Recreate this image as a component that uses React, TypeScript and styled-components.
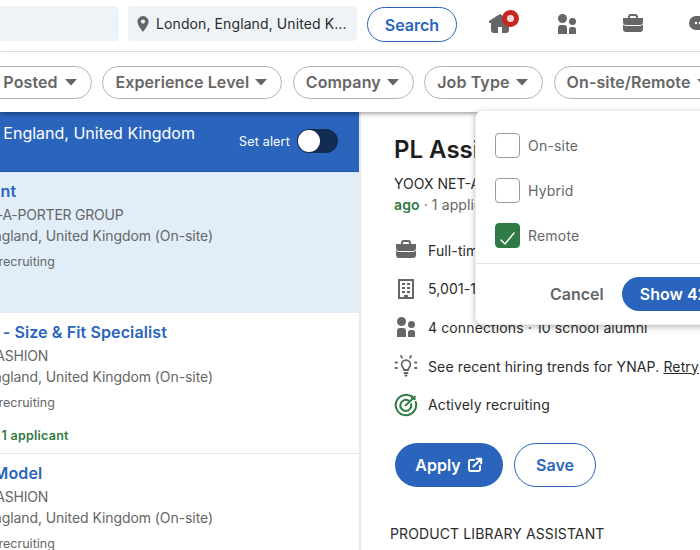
import * as React from "react";
import styled, { createGlobalStyle } from "styled-components";

const GlobalStyle = createGlobalStyle`
  html, body { margin: 0; padding: 0; background: #fff; }
  * { box-sizing: border-box; }
  body { font-family: Inter, "Liberation Sans", sans-serif; }
`;

const blue = "#2a64bd";
const green = "#2f7a45";
const gray = "#666666";
const ink = "#2b2b2b";

const Page = styled.div`
  position: relative;
  width: 700px;
  height: 550px;
  overflow: hidden;
  background: #fff;
`;

const Header = styled.header`
  display: flex;
  align-items: center;
  height: 52px;
  margin-left: -100px;
  width: 900px;
  padding-bottom: 4px;
  border-bottom: 1px solid #e8e8e8;
`;

const SearchInput = styled.div`
  width: 219px;
  height: 35px;
  background: #eef3f8;
  border-radius: 4px;
`;

const LocationInput = styled.div`
  display: flex;
  align-items: center;
  gap: 5px;
  width: 229px;
  height: 35px;
  margin-left: 9px;
  padding-left: 7px;
  background: #eef3f8;
  border-radius: 4px;
  font-size: 14px;
  letter-spacing: 0.1px;
  color: ${ink};
  white-space: nowrap;
`;

const SearchButton = styled.button`
  width: 90px;
  height: 35px;
  margin: 2px 0 0 10px;
  padding: 0;
  background: #fff;
  border: 1.5px solid ${blue};
  border-radius: 18px;
  color: ${blue};
  font: 600 16px Inter, sans-serif;
`;

const Nav = styled.nav`
  display: flex;
  margin: 1px 0 0 10px;
`;

const NavItem = styled.div`
  position: relative;
  display: flex;
  justify-content: center;
  width: 66.5px;
  color: ${gray};
`;

const Badge = styled.span`
  position: absolute;
  top: -2px;
  left: 34.5px;
  width: 17px;
  height: 17px;
  border-radius: 50%;
  background: #f3d9d7;
  border: 5.5px solid #c5281f;
`;

const FilterBar = styled.div`
  position: relative;
  z-index: 1;
  display: flex;
  align-items: center;
  gap: 10.4px;
  height: 60px;
  width: 1000px;
  margin-left: -100px;
  padding: 0 200px 0 50px;
  background: #fff;
  box-shadow: 100px 2px 4px rgba(0, 0, 0, 0.35);
`;

const FilterPill = styled.div<{ $width: number }>`
  flex: none;
  display: flex;
  align-items: center;
  justify-content: space-between;
  width: ${(p) => p.$width}px;
  height: 33px;
  padding: 0 14px 0 12px;
  border: 1.5px solid #b4b4b4;
  border-radius: 17px;
  font-size: 16px;
  font-weight: 600;
  letter-spacing: 0.12px;
  color: ${gray};
  white-space: nowrap;
`;

const Caret = styled.svg`
  flex: none;
  width: 12px;
  height: 6px;
  fill: ${gray};
`;

const Body = styled.main`
  display: flex;
`;

const JobList = styled.section`
  flex: none;
  width: 501px;
  margin-left: -140px;
  border-right: 2px solid #e9e9e9;
`;

const ListHeader = styled.div`
  display: flex;
  justify-content: space-between;
  height: 60px;
  padding: 11px 21px 0 0;
  background: ${blue};
  border-bottom: 1px solid #2358a8;
  color: #fff;
`;

const ListHeading = styled.div`
  padding-left: 18px;
  font-size: 16px;
  line-height: 20px;
  white-space: nowrap;
`;

const AlertBox = styled.div`
  display: flex;
  align-items: center;
  gap: 7px;
  height: 36px;
  font-size: 12.5px;
  letter-spacing: 0.2px;
`;

const Toggle = styled.span`
  display: flex;
  align-items: center;
  width: 41px;
  height: 24px;
  padding-left: 1px;
  border-radius: 12px;
  background: #132c52;
  &::before {
    content: "";
    width: 22px;
    height: 22px;
    border-radius: 50%;
    background: #fff;
  }
`;

const JobCard = styled.article<{ $selected?: boolean }>`
  height: 141px;
  padding: 9px 0 0 68px;
  background: ${(p) => (p.$selected ? "#e1eefa" : "#fff")};
  border-bottom: 1px solid ${(p) => (p.$selected ? "#e1eefa" : "#e6e6e6")};
  white-space: nowrap;
`;

const JobTitle = styled.div<{ $shift?: number }>`
  margin: 0 0 3px ${(p) => p.$shift ?? 0}px;
  font-size: 16px;
  font-weight: 600;
  line-height: 20px;
  letter-spacing: 0.12px;
  color: ${blue};
`;

const JobCompany = styled.div`
  font-size: 14px;
  line-height: 21px;
  letter-spacing: -0.22px;
  color: ${gray};
`;

const JobLine = styled.div`
  font-size: 14px;
  line-height: 21px;
  letter-spacing: -0.08px;
  color: ${gray};
`;

const JobRecruiting = styled.div`
  margin-top: 6px;
  padding-left: 20px;
  font-size: 12.5px;
  line-height: 20px;
  color: ${gray};
`;

const JobApplicants = styled.div`
  margin: 13px 0 0 4px;
  font-size: 12.5px;
  font-weight: 600;
  line-height: 20px;
  letter-spacing: 0.25px;
  color: ${green};
`;

const Detail = styled.section`
  flex: 1;
  padding: 23px 0 0 31px;
  white-space: nowrap;
`;

const DetailTitle = styled.h1`
  margin: 0;
  padding-left: 2px;
  font-size: 24px;
  font-weight: 600;
  line-height: 30px;
  color: #1d1d1d;
`;

const DetailCompany = styled.div`
  margin-top: 9px;
  padding-left: 2px;
  font-size: 14px;
  line-height: 20px;
  color: ${ink};
`;

const DetailMeta = styled.div`
  padding-left: 2px;
  font-size: 14px;
  line-height: 22px;
  letter-spacing: 0.1px;
  color: ${gray};
  b {
    font-weight: 600;
    color: ${green};
  }
`;

const Facts = styled.ul`
  margin: 15px 0 0;
  padding: 0;
  list-style: none;
`;

const Fact = styled.li`
  display: flex;
  align-items: center;
  gap: 10px;
  height: 38.6px;
  padding-left: 2px;
  font-size: 14px;
  letter-spacing: 0.12px;
  color: ${ink};
  a {
    color: ${ink};
    text-decoration: underline;
  }
`;

const FactIcon = styled.svg<{ $color?: string }>`
  flex: none;
  width: 24px;
  height: 24px;
  fill: ${(p) => p.$color ?? gray};
`;

const Actions = styled.div`
  display: flex;
  gap: 11px;
  margin: 19px 0 0 3px;
`;

const ApplyButton = styled.button`
  display: flex;
  align-items: center;
  justify-content: center;
  gap: 6px;
  width: 108px;
  height: 44px;
  padding: 0;
  border: 0;
  border-radius: 22px;
  background: ${blue};
  color: #fff;
  font: 600 16px Inter, sans-serif;
`;

const SaveButton = styled.button`
  width: 82px;
  height: 44px;
  padding: 0;
  background: #fff;
  border: 1.5px solid ${blue};
  border-radius: 22px;
  color: ${blue};
  font: 600 16px Inter, sans-serif;
`;

const Description = styled.p`
  margin: 37px 0 0 -2px;
  font-size: 14px;
  line-height: 20px;
  letter-spacing: 0.12px;
  color: ${ink};
`;

const Dropdown = styled.div`
  position: absolute;
  z-index: 2;
  top: 110px;
  left: 475px;
  width: 320px;
  height: 215px;
  padding-top: 12px;
  background: #fff;
  border: 1px solid #ececec;
  border-radius: 8px;
  box-shadow: 0 2px 6px rgba(0, 0, 0, 0.28);
`;

const Option = styled.label`
  display: flex;
  align-items: center;
  gap: 8px;
  height: 45px;
  padding-left: 19px;
  font-size: 14px;
  letter-spacing: 0.2px;
  color: ${gray};
`;

const Check = styled.span<{ $checked?: boolean }>`
  display: flex;
  align-items: center;
  justify-content: center;
  width: 25px;
  height: 25px;
  border-radius: 4px;
  border: 1.5px solid ${(p) => (p.$checked ? green : "#9a9a9a")};
  background: ${(p) => (p.$checked ? green : "#fff")};
`;

const DropdownFooter = styled.div`
  display: flex;
  align-items: center;
  gap: 18px;
  height: 61px;
  margin-top: 5px;
  padding-left: 74px;
  border-top: 1px solid #e2e2e2;
`;

const CancelText = styled.span`
  font-size: 16px;
  font-weight: 600;
  color: ${gray};
`;

const ShowButton = styled.button`
  width: 170px;
  height: 34px;
  padding: 0 0 0 18px;
  border: 0;
  border-radius: 17px;
  background: ${blue};
  color: #fff;
  text-align: left;
  white-space: nowrap;
  font: 600 16px Inter, sans-serif;
`;

const icons = {
  home: "M23 9v2h-2v7a3 3 0 01-3 3h-4v-6h-4v6H6a3 3 0 01-3-3v-7H1V9l11-7 5 3.18V2h3v5.09z",
  people:
    "M12 16v6H3v-6a3 3 0 013-3h3a3 3 0 013 3zm5.5-3A3.5 3.5 0 1014 9.5a3.5 3.5 0 003.5 3.5zm1 2h-2a2.5 2.5 0 00-2.5 2.5V22h7v-4.5a2.5 2.5 0 00-2.5-2.5zM7.5 2A4.5 4.5 0 1012 6.5 4.49 4.49 0 007.5 2z",
  jobs: "M17 6V5a3 3 0 00-3-3h-4a3 3 0 00-3 3v1H2v4a3 3 0 003 3h14a3 3 0 003-3V6zM9 5a1 1 0 011-1h4a1 1 0 011 1v1H9zm10 9a4 4 0 003-1.38V17a3 3 0 01-3 3H5a3 3 0 01-3-3v-4.38A4 4 0 005 14z",
  message:
    "M16 4H8a7 7 0 000 14h4v4l8.16-5.39A6.78 6.78 0 0023 11a7 7 0 00-7-7zm-8 8.25A1.25 1.25 0 119.25 11 1.25 1.25 0 018 12.25zm4 0A1.25 1.25 0 1113.25 11 1.25 1.25 0 0112 12.25zm4 0A1.25 1.25 0 1117.25 11 1.25 1.25 0 0116 12.25z",
  building:
    "M4 2v20h16V2zm14 18h-4v-2h-4v2H6V4h12zm-7-8H8v-2h3zm0 4H8v-2h3zm5-4h-3v-2h3zm-5-4H8V6h3zm5 0h-3V6h3zm0 8h-3v-2h3z",
};

const Icon: React.FC<{ d: string; color?: string }> = ({ d, color }) => (
  <FactIcon viewBox="0 0 24 24" $color={color}>
    <path d={d} />
  </FactIcon>
);

const Arrow: React.FC = () => (
  <Caret viewBox="0 0 12 6">
    <path d="M0 0h12L7 5.6a1.4 1.4 0 01-2 0z" />
  </Caret>
);

const Filter: React.FC<{ label: string; width: number }> = ({ label, width }) => (
  <FilterPill $width={width}>
    {label}
    <Arrow />
  </FilterPill>
);

const PinIcon: React.FC = () => (
  <svg width="16" height="18" viewBox="0 0 16 18" fill={gray} style={{ flex: "none" }}>
    <path
      fillRule="evenodd"
      d="M8 1a5.6 5.6 0 00-5.6 5.6C2.4 10.4 8 17 8 17s5.6-6.6 5.6-10.4A5.6 5.6 0 008 1zm0 7.7a2.1 2.1 0 110-4.2 2.1 2.1 0 010 4.2z"
    />
  </svg>
);

const BulbIcon: React.FC = () => (
  <svg width="24" height="24" viewBox="0 0 24 24" fill="none" stroke={gray} strokeWidth="1.8" strokeLinecap="round" style={{ flex: "none" }}>
    <path d="M10 16c0-1.800-2.400-3-2.400-5.400a4.400 4.400 0 018.800 0c0 2.400-2.400 3.600-2.400 5.400z" />
    <path d="M10.500 19h3M11.500 21.500h1" strokeWidth="2" />
    <path d="M7 2l1 1.700M17 2l-1 1.700M1.500 8.500h1.500M21 8.500h1.500M1.500 14h1.500M21 14h1.500" />
  </svg>
);

const TargetIcon: React.FC = () => (
  <svg width="24" height="24" viewBox="0 0 24 24" fill="none" stroke={green} strokeWidth="2" strokeLinecap="round" style={{ flex: "none" }}>
    <path d="M18.500 4.200A10.200 10.200 0 1021.700 9" />
    <path d="M14.500 7.600a5.500 5.500 0 102.600 3.400" />
    <path d="M11.500 12.500L21 3.500M18 3l.3 2.700 2.700.3" strokeWidth="1.800" />
  </svg>
);

const ExternalIcon: React.FC = () => (
  <svg width="16" height="16" viewBox="0 0 16 16" fill="none" stroke="#fff" strokeWidth="2" strokeLinecap="round" strokeLinejoin="round">
    <path d="M7 3H3.500A1.500 1.500 0 002 4.500v8A1.500 1.500 0 003.500 14h8a1.500 1.500 0 001.500-1.500V9" />
    <path d="M6.500 9.500L14 2M9.500 1.800H14.200V6.500" />
  </svg>
);

const CheckMark: React.FC = () => (
  <svg width="17" height="14" viewBox="0 0 17 14" fill="none" stroke="#fff" strokeWidth="1.500" strokeLinecap="round" style={{ marginTop: 6 }}>
    <path d="M2 8l4 4 9-11" />
  </svg>
);

const App: React.FC = () => {
  return (
    <Page>
      <GlobalStyle />
      <Header>
        <SearchInput />
        <LocationInput>
          <PinIcon />
          London, England, United K...
        </LocationInput>
        <SearchButton>Search</SearchButton>
        <Nav>
          <NavItem>
            <Icon d={icons.home} />
            <Badge />
          </NavItem>
          <NavItem>
            <Icon d={icons.people} />
          </NavItem>
          <NavItem>
            <Icon d={icons.jobs} />
          </NavItem>
          <NavItem>
            <Icon d={icons.message} />
          </NavItem>
        </Nav>
      </Header>

      <FilterBar>
        <Filter label="Date Posted" width={142} />
        <Filter label="Experience Level" width={180} />
        <Filter label="Company" width={121} />
        <Filter label="Job Type" width={119} />
        <Filter label="On-site/Remote" width={170} />
      </FilterBar>

      <Body>
        <JobList>
          <ListHeader>
            <ListHeading>Jobs in London, England, United Kingdom</ListHeading>
            <AlertBox>
              Set alert
              <Toggle />
            </AlertBox>
          </ListHeader>
          <JobCard $selected>
            <JobTitle $shift={-9}>PL Assistant</JobTitle>
            <JobCompany>YOOX NET-A-PORTER GROUP</JobCompany>
            <JobLine>London, England, United Kingdom (On-site)</JobLine>
            <JobRecruiting>Actively recruiting</JobRecruiting>
          </JobCard>
          <JobCard>
            <JobTitle $shift={-3}>Assistant - Size &amp; Fit Specialist</JobTitle>
            <JobCompany>MARKET FASHION</JobCompany>
            <JobLine>London, England, United Kingdom (On-site)</JobLine>
            <JobRecruiting>Actively recruiting</JobRecruiting>
            <JobApplicants>1 day ago · 1 applicant</JobApplicants>
          </JobCard>
          <JobCard>
            <JobTitle>Fashion Model</JobTitle>
            <JobCompany>MARKET FASHION</JobCompany>
            <JobLine>London, England, United Kingdom (On-site)</JobLine>
            <JobRecruiting>Actively recruiting</JobRecruiting>
          </JobCard>
        </JobList>

        <Detail>
          <DetailTitle>PL Assistant</DetailTitle>
          <DetailCompany>YOOX NET-A-PORTER GROUP · London</DetailCompany>
          <DetailMeta>
            <b>ago</b> · 1 applicant
          </DetailMeta>
          <Facts>
            <Fact>
              <Icon d={icons.jobs} />
              Full-time
            </Fact>
            <Fact>
              <Icon d={icons.building} />
              5,001-10,000 employees
            </Fact>
            <Fact>
              <Icon d={icons.people} />4 connections · 10 school alumni
            </Fact>
            <Fact>
              <BulbIcon />
              <span>
                See recent hiring trends for YNAP. <a>Retry</a>
              </span>
            </Fact>
            <Fact>
              <TargetIcon />
              Actively recruiting
            </Fact>
          </Facts>
          <Actions>
            <ApplyButton>
              Apply
              <ExternalIcon />
            </ApplyButton>
            <SaveButton>Save</SaveButton>
          </Actions>
          <Description>PRODUCT LIBRARY ASSISTANT</Description>
        </Detail>
      </Body>

      <Dropdown>
        <Option>
          <Check />
          On-site
        </Option>
        <Option>
          <Check />
          Hybrid
        </Option>
        <Option>
          <Check $checked>
            <CheckMark />
          </Check>
          Remote
        </Option>
        <DropdownFooter>
          <CancelText>Cancel</CancelText>
          <ShowButton>Show 42 results</ShowButton>
        </DropdownFooter>
      </Dropdown>
    </Page>
  );
};

export default App;
